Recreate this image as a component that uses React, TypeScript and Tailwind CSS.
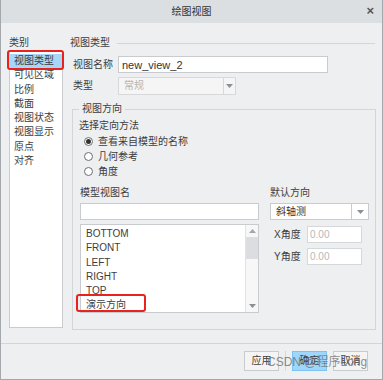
import React from 'react';

const categories = ['视图类型', '可见区域', '比例', '截面', '视图状态', '视图显示', '原点', '对齐'];
const views = ['BOTTOM', 'FRONT', 'LEFT', 'RIGHT', 'TOP', '演示方向'];
const radios = [
  { label: '查看来自模型的名称', checked: true },
  { label: '几何参考', checked: false },
  { label: '角度', checked: false },
];

const font = { fontFamily: '"Liberation Sans", "Noto Sans CJK SC", sans-serif' };

function Arrow() {
  return (
    <svg width="7" height="4" viewBox="0 0 7 4">
      <path d="M0 0 L7 0 L3.5 4 Z" fill="#8c8f93" />
    </svg>
  );
}

export default function App() {
  return (
    <div
      className="relative w-[383px] h-[380px] bg-[#eeeff1] border border-t-0 border-[#a4a7ab] text-[10px] leading-[14px] text-[#3d3d3d] overflow-hidden"
      style={font}
    >
      {/* 标题栏 */}
      <div className="relative h-[23px] bg-[#dcdfe2] flex items-center justify-center">
        <span className="text-[10px] text-[#333]">绘图视图</span>
        <span className="absolute right-[8px] top-[4px] text-[13px] leading-[14px] text-[#555] font-bold">×</span>
      </div>

      <div className="flex h-[320px]">
        {/* 类别 */}
        <div className="ml-[8px] pt-[13px] w-[54px]">
          <div className="h-[14px]">类别</div>
          <div className="mt-[1px] h-[277px] bg-white border border-[#c9cbce] pt-[2px]">
            {categories.map((c, i) => (
              <div
                key={c}
                className={`h-[14.3px] leading-[14px] pl-[4px] ${i === 0 ? 'bg-[#a7d6f7]' : ''}`}
              >
                {c}
              </div>
            ))}
          </div>
        </div>

        {/* 右侧 */}
        <div className="ml-[7px] pt-[13px] w-[305px]">
          <div className="flex items-center h-[14px]">
            <span>视图类型</span>
            <div className="flex-1 ml-[7px] border-t border-[#d3d5d8]" />
          </div>

          <div className="flex items-center mt-[6px] h-[17px]">
            <span className="w-[48px] pl-[3px]">视图名称</span>
            <div className="w-[210px] h-[17px] bg-white border border-[#c9cbce] flex items-center pl-[3px] text-[11px] text-[#333]">
              new_view_2
            </div>
          </div>

          <div className="flex items-center mt-[4px] h-[18px]">
            <span className="w-[48px] pl-[3px]">类型</span>
            <div className="w-[118px] h-[18px] bg-[#f5f5f5] border border-[#d6d8da] flex items-center">
              <span className="flex-1 pl-[5px] text-[#b4b4b4]">常规</span>
              <div className="w-[12px] h-full border-l border-[#d6d8da] flex items-center justify-center">
                <Arrow />
              </div>
            </div>
          </div>

          <fieldset className="mt-[7px] ml-[2px] w-[302px] h-[228px] border border-[#d3d5d8] px-[6px]">
            <legend className="px-[3px] h-[14px]">视图方向</legend>
            <div className="mt-[3px] h-[14px]">选择定向方法</div>
            <div className="mt-[1px] pl-[5px]">
              {radios.map((r) => (
                <div key={r.label} className="flex items-center h-[15px]">
                  <span className="w-[9px] h-[9px] rounded-full border border-[#6e6e6e] bg-white flex items-center justify-center">
                    {r.checked && <span className="w-[5px] h-[5px] rounded-full bg-[#333]" />}
                  </span>
                  <span className="ml-[5px]">{r.label}</span>
                </div>
              ))}
            </div>

            <div className="flex mt-[7px]">
              <div className="ml-[1px] w-[179px]">
                <div className="h-[14px]">模型视图名</div>
                <div className="mt-[3px] h-[17px] bg-white border border-[#c9cbce]" />
                <div className="mt-[4px] h-[89px] bg-white border border-[#c9cbce] flex">
                  <div className="flex-1 pt-[2px] pl-[5px]">
                    {views.map((v) => (
                      <div key={v} className="h-[14.3px] leading-[14px]">{v}</div>
                    ))}
                  </div>
                  <div className="w-[13px] bg-[#f7f7f7] border-l border-[#e2e3e5] flex flex-col items-center">
                    <svg width="7" height="4" viewBox="0 0 7 4" className="mt-[4px]">
                      <path d="M0 4 L7 4 L3.5 0 Z" fill="#a3a6aa" />
                    </svg>
                    <div className="mt-[4px] w-full h-[22px] bg-[#dcdde0]" />
                    <div className="flex-1" />
                    <div className="mb-[4px]"><Arrow /></div>
                  </div>
                </div>
              </div>

              <div className="ml-[11px] w-[99px]">
                <div className="h-[14px]">默认方向</div>
                <div className="mt-[3px] h-[17px] bg-white border border-[#c9cbce] flex items-center">
                  <span className="flex-1 pl-[5px] text-[#333]">斜轴测</span>
                  <div className="w-[17px] h-full border-l border-[#c9cbce] flex items-center justify-center">
                    <Arrow />
                  </div>
                </div>
                <div className="mt-[6px] flex items-center h-[17px]">
                  <span className="w-[37px] pl-[4px]">X角度</span>
                  <div className="w-[55px] h-[17px] bg-white border border-[#d6d8da] flex items-center pl-[2px] text-[#b8b8b8]">0.00</div>
                </div>
                <div className="mt-[5px] flex items-center h-[17px]">
                  <span className="w-[37px] pl-[4px]">Y角度</span>
                  <div className="w-[55px] h-[17px] bg-white border border-[#d6d8da] flex items-center pl-[2px] text-[#b8b8b8]">0.00</div>
                </div>
              </div>
            </div>
          </fieldset>
        </div>
      </div>

      {/* 按钮区 */}
      <div className="border-t border-[#d3d5d8] pt-[7px] flex justify-end pr-[14px]">
        <button className="w-[35px] h-[20px] bg-[#f4f4f4] border border-[#c9cbce] text-[10px]">应用</button>
        <div className="ml-[6px] w-px h-[20px] bg-[#d6d8da]" />
        <button className="ml-[6px] w-[35px] h-[20px] bg-[#9fd6fb] border border-[#7cc2f2] text-[10px]">确定</button>
        <button className="ml-[6px] w-[35px] h-[20px] bg-[#f4f4f4] border border-[#c9cbce] text-[10px]">取消</button>
      </div>

      {/* 红框标注 */}
      <div className="absolute left-[6px] top-[50px] w-[57px] h-[20px] border-2 border-[#e8231f] rounded-[3px]" />
      <div className="absolute left-[75px] top-[294px] w-[70px] h-[18px] border-2 border-[#e8231f] rounded-[3px]" />

      {/* 水印 */}
      <div className="absolute left-[266px] top-[355px] text-[12px] leading-[14px] text-[#707070]/80 whitespace-nowrap">
        CSDN @程序Long
      </div>
    </div>
  );
}
